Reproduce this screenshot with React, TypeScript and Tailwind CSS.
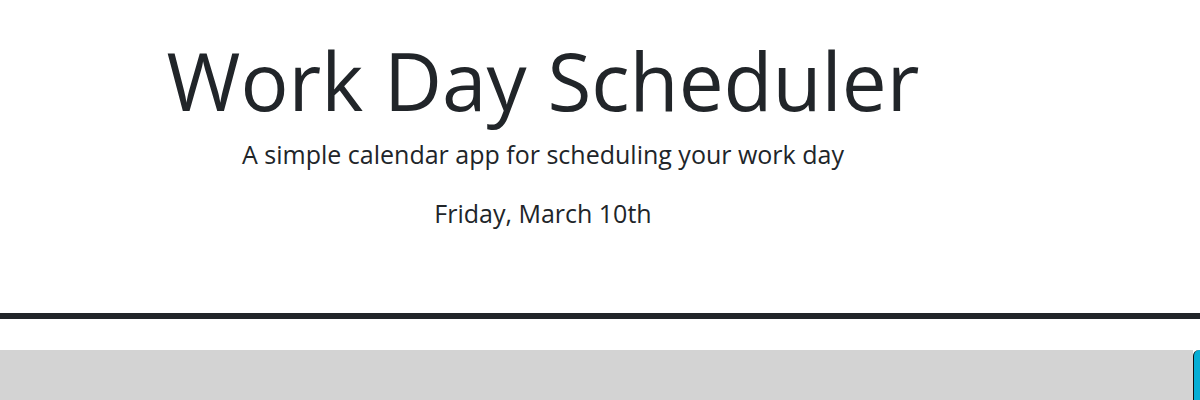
export default function App() {
  return (
    <div className="min-h-[400px] bg-white text-[#212529]" style={{ fontFamily: '"Open Sans", "Liberation Sans", sans-serif' }}>
      {/* Header */}
      <header className="border-b-[6px] border-[#212529] pt-[32px] pb-[81px] pr-[114px] text-center">
        <h1 className="text-[80px] font-normal leading-[1.2]">Work Day Scheduler</h1>
        <p className="mt-[8px] text-[25px] font-normal leading-[1.5]">A simple calendar app for scheduling your work day</p>
        <p className="mt-[21px] text-[25px] font-normal leading-[1.5]">Friday, March 10th</p>
      </header>

      {/* Time blocks */}
      <div className="mt-[31px]">
        <div className="flex h-[80px]">
          <div className="flex-1 bg-[#d3d3d3]" />
          <button className="w-[7px] rounded-tl-[6px] border-l border-[#111] bg-[#06aed5]" />
        </div>
      </div>
    </div>
  );
}
